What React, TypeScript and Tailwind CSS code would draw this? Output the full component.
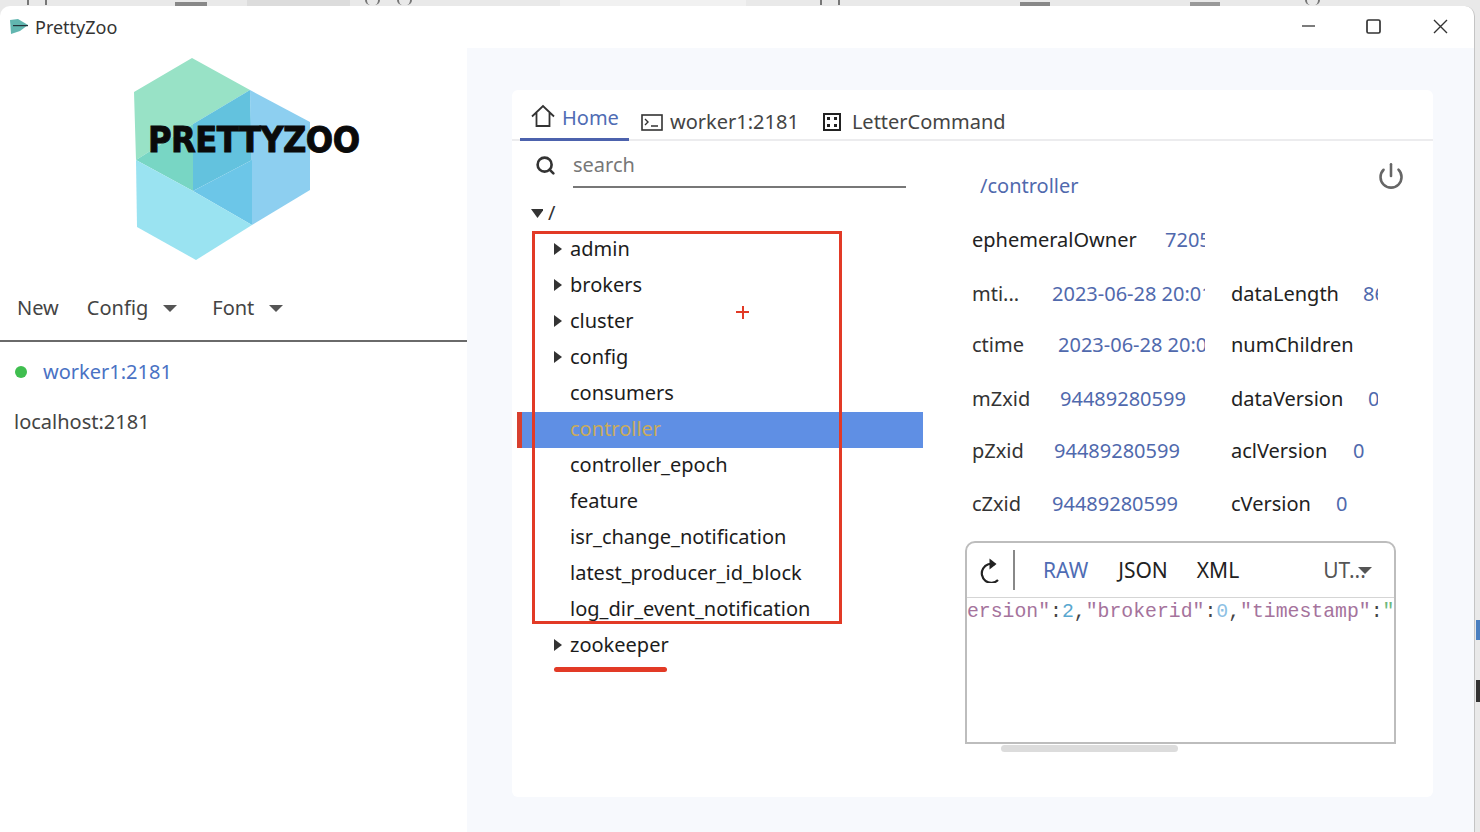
import { Power, Search } from 'lucide-react';

const UI_FONT = 'font-["Noto_Sans","Open_Sans",sans-serif]';

const treeItems = [
  { name: 'admin', arrow: true },
  { name: 'brokers', arrow: true },
  { name: 'cluster', arrow: true },
  { name: 'config', arrow: true },
  { name: 'consumers' },
  { name: 'controller', active: true },
  { name: 'controller_epoch' },
  { name: 'feature' },
  { name: 'isr_change_notification' },
  { name: 'latest_producer_id_block' },
  { name: 'log_dir_event_notification' },
  { name: 'zookeeper', arrow: true },
];

const statRows = [
  { label: 'mti...', labelW: 'w-[80px]', value: '2023-06-28 20:01:14', valueW: 'w-[153px]', key2: 'dataLength', key2W: 'w-[132px]', value2: '86', value2W: 'w-[15px]', nudge: '' },
  { label: 'ctime', labelW: 'w-[86px]', value: '2023-06-28 20:01:14', valueW: 'w-[147px]', key2: 'numChildren', key2W: 'w-[132px]', value2: '', value2W: 'w-0', nudge: 'pb-[3px]' },
  { label: 'mZxid', labelW: 'w-[88px]', value: '94489280599', valueW: 'w-[145px]', key2: 'dataVersion', key2W: 'w-[137px]', value2: '0', value2W: 'w-[10px]', nudge: '' },
  { label: 'pZxid', labelW: 'w-[82px]', value: '94489280599', valueW: 'w-[151px]', key2: 'aclVersion', key2W: 'w-[122px]', value2: '0', value2W: 'w-[15px]', nudge: 'pb-[2px]' },
  { label: 'cZxid', labelW: 'w-[80px]', value: '94489280599', valueW: 'w-[153px]', key2: 'cVersion', key2W: 'w-[105px]', value2: '0', value2W: 'w-[15px]', nudge: '' },
];

function Caret({ open }: { open?: boolean }) {
  return (
    <svg width="12" height="12" viewBox="0 0 12 12" className="shrink-0 fill-[#333]">
      {open ? <path d="M0 2h13L6.5 11z" /> : <path d="M2 0l8 6-8 6z" />}
    </svg>
  );
}

function MenuCaret() {
  return (
    <svg width="14" height="7" viewBox="0 0 14 7" className="fill-[#555]">
      <path d="M0 0h14L7 7z" />
    </svg>
  );
}

function Logo() {
  return (
    <div className="relative ml-[130px] mt-[7px] h-[210px] w-[240px]">
      <svg width="190" height="210" viewBox="130 55 190 210">
        <polygon points="192,58 250,90 193,124 136,160 134,92" fill="#98e2c6" />
        <polygon points="136,160 193,124 193,191" fill="#78d6c4" />
        <polygon points="193,124 250,90 252,160 193,191" fill="#63c2de" />
        <polygon points="250,90 310,122 310,190 252,225" fill="#8dcff0" />
        <polygon points="193,191 252,160 252,225" fill="#6cc6e8" />
        <polygon points="136,160 193,191 252,225 196,260 137,227" fill="#9ae3f1" />
      </svg>
      <span className='absolute left-[18px] top-[64px] origin-left scale-x-[0.92] font-["DejaVu_Sans",sans-serif] text-[35px] leading-[42px] font-bold tracking-[-0.6px] text-[#0a0a0a] [-webkit-text-stroke:1px_#0a0a0a]'>
        PRETTYZOO
      </span>
    </div>
  );
}

function TitleBar() {
  return (
    <header className="flex h-[42px] shrink-0 items-center">
      <svg width="18" height="16" viewBox="0 0 18 16" className="ml-[10px]">
        <polygon points="0,1 8,0 18,6 10,12 1,15" fill="#62b6b0" />
        <rect x="3" y="6" width="15" height="1.2" fill="#22333a" />
      </svg>
      <span className="ml-[7px] text-[18px] text-[#333]">PrettyZoo</span>
      <div className="ml-auto mr-[26px] flex items-center gap-[51px] pb-[2px] text-[#333]">
        <svg width="15" height="15" viewBox="0 0 15 15" className="stroke-[#444]">
          <path d="M1 7h13" strokeWidth="1.4" />
        </svg>
        <svg width="15" height="15" viewBox="0 0 15 15" fill="none" className="-translate-x-[1px] stroke-[#333]">
          <rect x="1" y="1" width="13" height="13" rx="1.5" strokeWidth="1.7" />
        </svg>
        <svg width="15" height="15" viewBox="0 0 15 15" className="stroke-[#333]">
          <path d="M1 1l13 13M14 1L1 14" strokeWidth="1.4" />
        </svg>
      </div>
    </header>
  );
}

function Sidebar() {
  return (
    <aside className="w-[467px] shrink-0">
      <Logo />
      <nav className="mt-[25px] flex h-[52px] items-center border-b-2 border-[#6a6a6a] pb-[14px] pl-[17px] text-[#444]">
        <span>New</span>
        <span className="ml-[28px]">Config</span>
        <span className="ml-[15px]">
          <MenuCaret />
        </span>
        <span className="ml-[35px]">Font</span>
        <span className="ml-[15px]">
          <MenuCaret />
        </span>
      </nav>
      <div className="flex h-[59px] items-center pl-[15px]">
        <span className="h-[12px] w-[12px] rounded-full bg-[#3fbe4f]" />
        <span className="ml-[16px] text-[#4a72c4]">worker1:2181</span>
      </div>
      <div className="pl-[14px] text-[#444] leading-[42px]">localhost:2181</div>
    </aside>
  );
}

function Tabs() {
  return (
    <div className="flex h-[51px] items-end border-b-2 border-[#ececee] pl-[8px]">
      <div className="-mb-[2px] flex h-[43px] w-[109px] items-start gap-[7px] border-b-[3px] border-[#4c62ad] pl-[11px] pt-[6px] text-[#4f6cb4]">
        <svg width="24" height="24" viewBox="0 0 24 24" fill="none" className="stroke-[#333]">
          <path d="M1 12.5L12 2l11 10.5M5.5 9v13h13V9" strokeWidth="1.8" />
        </svg>
        <span className="leading-[28px]">Home</span>
      </div>
      <div className="ml-[12px] flex h-[36px] items-center gap-[7px] pt-[2px] text-[#444]">
        <svg width="22" height="17" viewBox="0 0 22 17" fill="none" className="stroke-[#333]">
          <rect x="1" y="1" width="20" height="15" strokeWidth="1.6" />
          <path d="M4 5l3 3-3 3M10 12h7" strokeWidth="1.4" />
        </svg>
        <span>worker1:2181</span>
      </div>
      <div className="ml-[24px] flex h-[36px] items-center gap-[11px] pt-[2px] text-[#444]">
        <svg width="18" height="18" viewBox="0 0 18 18" fill="none" className="stroke-[#222]">
          <rect x="1" y="1" width="16" height="16" strokeWidth="2" />
          <rect x="4" y="4" width="3" height="3" fill="#222" stroke="none" />
          <rect x="11" y="4" width="3" height="3" fill="#222" stroke="none" />
          <rect x="4" y="11" width="3" height="3" fill="#222" stroke="none" />
          <rect x="11" y="11" width="3" height="3" fill="#222" stroke="none" />
        </svg>
        <span>LetterCommand</span>
      </div>
    </div>
  );
}

function Tree() {
  return (
    <div className="w-[411px] shrink-0 pl-[5px]">
      <div className="flex h-[47px] items-start">
        <Search size={21} strokeWidth={3} className="ml-[18px] mt-[14px] text-[#333]" />
        <div className="ml-[17px] h-[47px] w-[333px] border-b-2 border-[#777] text-[#777] leading-[48px]">search</div>
      </div>
      <div className="flex h-[44px] items-center pl-[14px] pt-[5px]">
        <Caret open />
        <span className="ml-[5px] text-[#333]">/</span>
      </div>
      {treeItems.map(item => (
        <div
          key={item.name}
          className={
            item.active
              ? 'flex h-[36px] items-center border-l-[5px] border-[#d8402f] bg-[#5f8fe4] pb-[2px] pl-[30px] text-[#c9ab5c]'
              : 'flex h-[36px] items-center pb-[2px] pl-[35px] text-[#1c1c1c]'
          }
        >
          {item.arrow ? <Caret /> : <span className="w-[12px]" />}
          <span className="ml-[6px]">{item.name}</span>
        </div>
      ))}
    </div>
  );
}

function DataEditor() {
  return (
    <div className="-ml-[7px] mt-[10px]">
      <div className="h-[203px] w-[431px] overflow-hidden rounded-t-[10px] border-2 border-[#bdbdbd] bg-white">
        <div className="flex h-[55px] items-center border-b border-[#d5d5d5] text-[21px]">
          <svg width="22" height="26" viewBox="0 0 22 26" fill="none" className="ml-[12px] stroke-[#222]">
            <path d="M16 7.5A9.5 9.5 0 1 0 19 23" strokeWidth="2.2" />
            <path d="M10.5 1.5l7 5.5-7 5.5" fill="#222" stroke="none" />
          </svg>
          <span className="ml-[12px] h-[40px] w-[2px] bg-[#888]" />
          <span className="ml-[28px] text-[#4f6cb4]">RAW</span>
          <span className="ml-[30px] text-[#222]">JSON</span>
          <span className="ml-[29px] text-[#222]">XML</span>
          <span className="ml-[84px] text-[#555]">UT...</span>
          <span className="-ml-[8px] mt-[2px]">
            <MenuCaret />
          </span>
        </div>
        <div className='overflow-hidden whitespace-nowrap font-["Liberation_Mono",monospace] text-[19.8px] leading-[24px] pt-[2px]'>
          <span className="text-[#a5739c]">ersion"</span>
          <span className="text-[#444]">:</span>
          <span className="text-[#5aa8d0]">2</span>
          <span className="text-[#444]">,</span>
          <span className="text-[#a5739c]">"brokerid"</span>
          <span className="text-[#444]">:</span>
          <span className="text-[#8cc0e4]">0</span>
          <span className="text-[#444]">,</span>
          <span className="text-[#a5739c]">"timestamp"</span>
          <span className="text-[#444]">:</span>
          <span className="text-[#6cb87c]">"</span>
        </div>
      </div>
      <div className="ml-[36px] mt-[1px] h-[7px] w-[177px] rounded-full bg-[#dcdcdc]" />
    </div>
  );
}

function Detail() {
  return (
    <div className="flex-1 pl-[49px]">
      <div className="flex h-[64px] items-start justify-between pl-[8px] pr-[28px] pt-[31px]">
        <span className="leading-[28px] text-[#5069ad]">/controller</span>
        <Power size={28} strokeWidth={2.2} className="-mt-[10px] text-[#666]" />
      </div>
      <div className="flex h-[63px] items-center pt-[7px]">
        <span className="w-[193px] text-[#222]">ephemeralOwner</span>
        <span className="w-[40px] overflow-hidden whitespace-nowrap text-[#5069ad]">72057594</span>
      </div>
      {statRows.map(row => (
        <div key={row.label} className={`flex h-[52.5px] items-center ${row.nudge}`}>
          <span className={`${row.labelW} shrink-0 text-[#333]`}>{row.label}</span>
          <span className={`${row.valueW} shrink-0 overflow-hidden whitespace-nowrap text-[#5069ad]`}>{row.value}</span>
          <span className="w-[26px] shrink-0" />
          <span className={`${row.key2W} shrink-0 text-[#222]`}>{row.key2}</span>
          <span className={`${row.value2W} overflow-hidden whitespace-nowrap text-[#5069ad]`}>{row.value2}</span>
        </div>
      ))}
      <DataEditor />
    </div>
  );
}

export default function App() {
  return (
    <main className={`relative h-[832px] w-[1480px] overflow-hidden bg-[#e9e9e9] pt-[6px] text-[20px] leading-[30px] ${UI_FONT}`}>
      {/* desktop behind the window, only the bottom of its toolbar shows */}
      <span className="absolute left-[27px] top-0 h-[5px] w-[20px] border-x-2 border-[#777]" />
      <span className="absolute left-[175px] top-[2px] h-[4px] w-[32px] bg-[#888]" />
      <span className="absolute left-[247px] top-0 h-[6px] w-[103px] bg-[#dcdcdc]" />
      <span className="absolute left-[365px] top-0 h-[5px] w-[15px] rounded-b-full border-x-2 border-[#777]" />
      <span className="absolute left-[397px] top-0 h-[5px] w-[15px] rounded-b-full border-x-2 border-[#777]" />
      <span className="absolute left-[560px] top-0 h-[6px] w-[186px] bg-[#f1f1f1]" />
      <span className="absolute left-[820px] top-0 h-[5px] w-[20px] border-x-2 border-[#777]" />
      <span className="absolute left-[1020px] top-[2px] h-[4px] w-[30px] bg-[#888]" />
      <span className="absolute left-[1190px] top-[2px] h-[4px] w-[30px] bg-[#999]" />
      <span className="absolute left-[1305px] top-0 h-[5px] w-[15px] rounded-b-full border-x-2 border-[#777]" />

      <div className="relative flex h-full w-[1475px] flex-col rounded-t-[10px] border-r border-[#c4c4c4] bg-white">
        <TitleBar />
        <div className="flex flex-1">
          <Sidebar />
          <section className="flex-1 bg-[#f7f9fd] pb-[35px] pl-[45px] pr-[41px] pt-[42px]">
            <div className="h-full rounded-[6px] bg-white">
              <Tabs />
              <div className="flex">
                <Tree />
                <Detail />
              </div>
            </div>
          </section>
        </div>
      </div>

      {/* red annotation drawn over the screen recording */}
      <div className="absolute left-[532px] top-[231px] h-[393px] w-[310px] border-[3px] border-[#e23a26]" />
      <div className="absolute left-[554px] top-[667px] h-[5px] w-[113px] rounded-full bg-[#e23a26]" />
      <span className="absolute left-[736px] top-[311px] h-[2px] w-[13px] bg-[#e23a26]" />
      <span className="absolute left-[741.5px] top-[306px] h-[13px] w-[2px] bg-[#e23a26]" />

      {/* bits of the window behind */}
      <span className="absolute left-[1476px] top-[620px] h-[20px] w-[4px] bg-[#4a7fc0]" />
      <span className="absolute left-[1476px] top-[680px] h-[22px] w-[4px] bg-[#333]" />
    </main>
  );
}
